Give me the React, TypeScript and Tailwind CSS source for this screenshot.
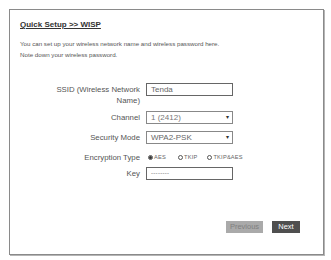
import React from "react";

const font = { fontFamily: "'Liberation Sans', Arial, sans-serif" };

function Radio({ checked, label }: { checked?: boolean; label: string }) {
  return (
    <span className="flex items-center gap-[1px]">
      <span className="w-[5px] h-[5px] rounded-full border border-[#555] flex items-center justify-center">
        {checked && <span className="w-[3px] h-[3px] rounded-full bg-[#333]" />}
      </span>
      <span className="text-[5.7px] leading-[6px] text-[#666] tracking-[0.2px]">{label}</span>
    </span>
  );
}

export default function App() {
  return (
    <div className="w-[331px] h-[260px] bg-white pt-[9px] pl-[9px]" style={font}>
      <div className="w-[315px] h-[246px] border border-[#8a8a8a] shadow-[1px_1px_0_#b5b5b5] pl-[10px] pt-[10px] flex flex-col">
        <div className="text-[8px] leading-[10px] font-bold underline text-[#333]">Quick Setup &gt;&gt; WISP</div>
        <div className="mt-[8px] text-[6.2px] leading-[11px] text-[#555]">
          <div>You can set up your wireless network name and wireless password here.</div>
          <div>Note down your wireless password.</div>
        </div>

        <div className="mt-[23px] flex">
          <div className="w-[120px] text-right text-[7.8px] leading-[11px] text-[#555] pt-[1px]">
            SSID (Wireless Network
            <br />
            Name)
          </div>
          <div className="ml-[6px] w-[87px] h-[13px] border border-[#666] text-[8px] leading-[11px] text-[#666] pl-[4px]">Tenda</div>
        </div>

        <div className="mt-[5px] flex items-center">
          <div className="w-[120px] text-right text-[7.8px] leading-[11px] text-[#555]">Channel</div>
          <div className="ml-[6px] w-[87px] h-[13px] border border-[#888] text-[8px] leading-[11px] text-[#777] pl-[4px] pr-[3px] flex justify-between">
            <span>1 (2412)</span>
            <span className="text-[6px] text-[#333]">▾</span>
          </div>
        </div>

        <div className="mt-[7px] flex items-center">
          <div className="w-[120px] text-right text-[7.8px] leading-[11px] text-[#555]">Security Mode</div>
          <div className="ml-[6px] w-[87px] h-[13px] border border-[#888] text-[8px] leading-[11px] text-[#666] pl-[4px] pr-[3px] flex justify-between">
            <span>WPA2-PSK</span>
            <span className="text-[6px] text-[#333]">▾</span>
          </div>
        </div>

        <div className="mt-[7px] flex items-center h-[12px]">
          <div className="w-[120px] text-right text-[7.8px] leading-[11px] text-[#555]">Encryption Type</div>
          <div className="ml-[8px] flex items-center">
            <Radio checked label="AES" />
            <span className="w-[12px]" />
            <Radio label="TKIP" />
            <span className="w-[10px]" />
            <Radio label="TKIP&AES" />
          </div>
        </div>

        <div className="mt-[4px] flex items-center">
          <div className="w-[120px] text-right text-[7.8px] leading-[11px] text-[#555]">Key</div>
          <div className="ml-[6px] w-[87px] h-[13px] border border-[#666] text-[6px] leading-[11px] text-[#555] pl-[4px] tracking-[0.3px]">--------</div>
        </div>

        <div className="mt-[41px] flex justify-end pr-[23px] gap-[9px]">
          <div className="w-[37px] h-[12px] bg-[#aaa] text-[#808080] text-[7.5px] leading-[12px] text-center">Previous</div>
          <div className="w-[28px] h-[12px] bg-[#4f4f4f] text-white text-[7.5px] leading-[12px] text-center">Next</div>
        </div>
      </div>
    </div>
  );
}
